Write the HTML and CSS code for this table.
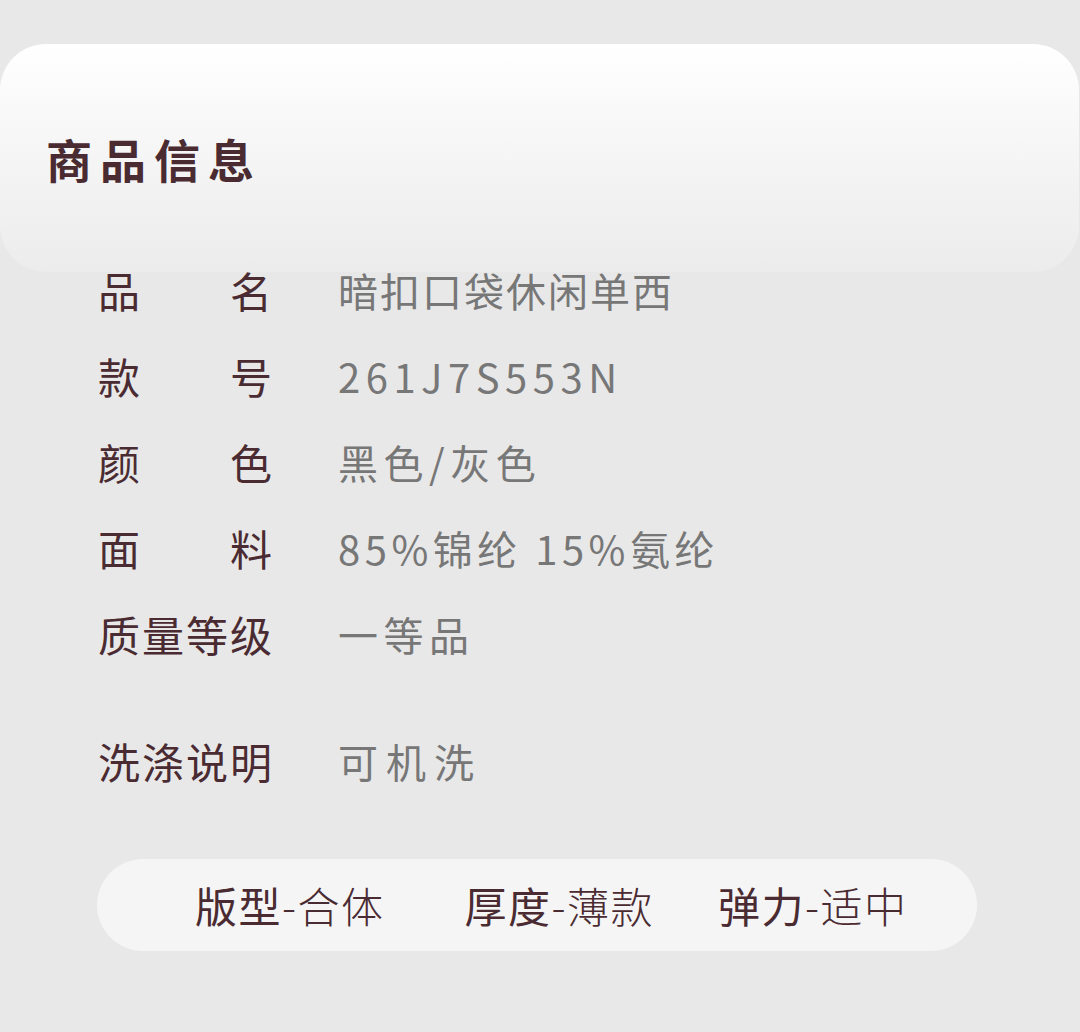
FILE: index.html
```html
<!DOCTYPE html>
<html lang="zh-CN">
<head>
    <meta charset="UTF-8">
    <meta name="viewport" content="width=device-width, initial-scale=1.0">
    <title>商品信息</title>
    <link rel="stylesheet" href="styles.css">
</head>
<body>
    <div class="page">
        <div class="card">
            <h1>商品信息</h1>
        </div>

        <div class="specs">
            <div class="row">
                <div class="label split"><span>品</span><span>名</span></div>
                <div class="value">暗扣口袋休闲单西</div>
            </div>
            <div class="row">
                <div class="label split"><span>款</span><span>号</span></div>
                <div class="value code">261J7S553N</div>
            </div>
            <div class="row">
                <div class="label split"><span>颜</span><span>色</span></div>
                <div class="value wide">黑色/灰色</div>
            </div>
            <div class="row">
                <div class="label split"><span>面</span><span>料</span></div>
                <div class="value mixed">85%锦纶 15%氨纶</div>
            </div>
            <div class="row">
                <div class="label">质量等级</div>
                <div class="value wide">一等品</div>
            </div>
            <div class="row wash">
                <div class="label">洗涤说明</div>
                <div class="value wider">可机洗</div>
            </div>
        </div>

        <div class="tags">
            <div class="tag first"><b>版型</b>-合体</div>
            <div class="tag"><b>厚度</b>-薄款</div>
            <div class="tag"><b>弹力</b>-适中</div>
        </div>
    </div>
</body>
</html>
```

FILE: styles.css
```css
* {
    margin: 0;
    padding: 0;
    box-sizing: border-box;
}

body {
    font-family: "Noto Sans CJK SC", "Noto Sans", sans-serif;
    background: #e8e8e8;
    min-height: 100vh;
}

.page {
    padding-top: 44px;
}

.card {
    height: 228px;
    margin-right: 1px;
    border-radius: 46px;
    background: linear-gradient(180deg, #ffffff 0%, #f3f3f3 60%, #ececec 100%);
    display: flex;
    align-items: center;
    padding-left: 46px;
}

h1 {
    color: #4a2b32;
    font-size: 46px;
    font-weight: 700;
    letter-spacing: 8px;
    line-height: 1;
}

.specs {
    padding-left: 98px;
    display: flex;
    flex-direction: column;
    gap: 42px;
    margin-top: -4px;
}

.row {
    display: flex;
    align-items: center;
    height: 44px;
    gap: 66px;
}

.row.wash {
    margin-top: 41px;
}

.label {
    width: 174px;
    color: #4a2b32;
    font-size: 42px;
    line-height: 44px;
    letter-spacing: 2px;
    white-space: nowrap;
}

.label.split {
    display: flex;
    justify-content: space-between;
    letter-spacing: 0;
}

.value {
    color: #777;
    font-size: 40px;
    line-height: 44px;
    letter-spacing: 2px;
    white-space: nowrap;
}

.value.code {
    letter-spacing: 5.5px;
}

.value.mixed {
    letter-spacing: 4.5px;
}

.value.wide {
    letter-spacing: 5.5px;
}

.value.wider {
    letter-spacing: 8px;
}

.tags {
    margin: 76px 0 0 97px;
    width: 880px;
    height: 92px;
    border-radius: 46px;
    background: #f5f5f5;
    display: flex;
    align-items: center;
    padding-left: 98px;
    gap: 64px;
}

.tag {
    color: #4a2b32;
    font-size: 42px;
    font-weight: 300;
    line-height: 1;
    letter-spacing: 1.5px;
    white-space: nowrap;
}

.tag.first {
    margin-right: 16px;
}

.tag b {
    font-weight: 400;
}
```
